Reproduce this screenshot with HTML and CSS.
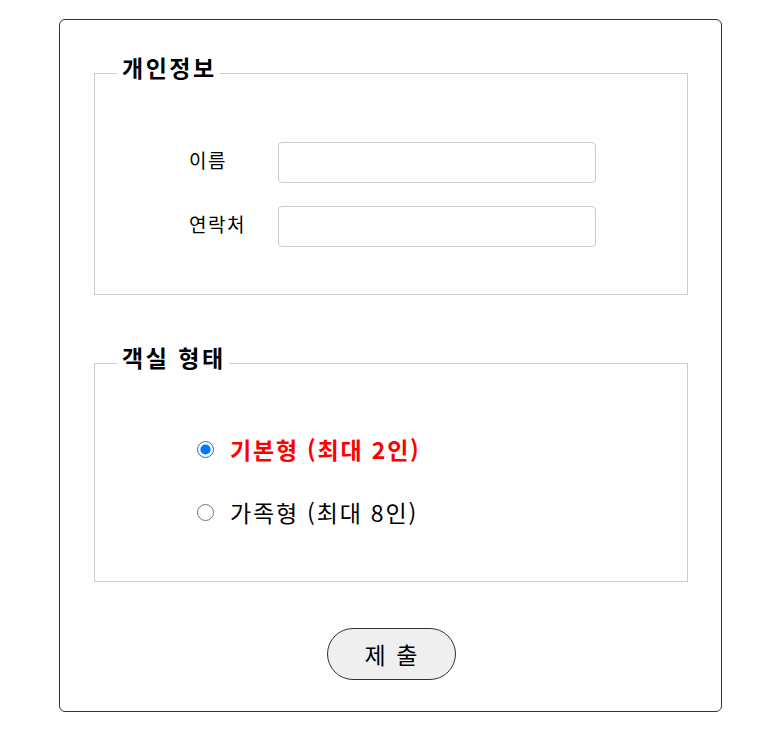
FILE: index.html
```html
<!DOCTYPE html>
<html lang="ko">
<head>
<meta charset="utf-8">
<title>객실 예약</title>
<link rel="stylesheet" href="styles.css">
</head>
<body>
<form class="card">
  <fieldset class="group">
    <legend class="legend">개인정보</legend>
    <div class="fields">
      <label class="label" for="name">이름</label>
      <input class="input" id="name" type="text">
      <label class="label" for="phone">연락처</label>
      <input class="input" id="phone" type="text">
    </div>
  </fieldset>
  <fieldset class="group group-room">
    <legend class="legend">객실 형태</legend>
    <div class="options">
      <label class="option option-checked"><input class="radio" type="radio" name="room" checked><span>기본형 (최대 2인)</span></label>
      <label class="option"><input class="radio" type="radio" name="room"><span>가족형 (최대 8인)</span></label>
    </div>
  </fieldset>
  <div class="actions">
    <button class="submit" type="button">제 출</button>
  </div>
</form>
</body>
</html>
```
FILE: styles.css
```css
* { box-sizing: border-box; }
body {
  margin: 0;
  font-family: "Noto Sans CJK KR", "Noto Sans", sans-serif;
  color: #000;
  background: #fff;
}
.card {
  width: 663px;
  margin: 19px 0 0 59px;
  padding: 33px 33px 31px 34px;
  border: 1px solid #333;
  border-radius: 6px;
}
.group {
  margin: 0;
  padding: 0;
  min-width: 0;
  border: 1px solid #ccc;
}
.legend {
  margin-left: 22px;
  padding: 0 3px 12px 5px;
  font-size: 23px;
  font-weight: 700;
  line-height: 28px;
  letter-spacing: 2.5px;
}
.fields {
  display: grid;
  grid-template-columns: 89px 318px;
  grid-auto-rows: 41px;
  row-gap: 23px;
  align-items: center;
  padding: 49px 0 47px 94px;
}
.label {
  font-size: 19px;
  line-height: 24px;
  letter-spacing: 1.5px;
  margin-top: -6px;
}
.input {
  width: 318px;
  height: 41px;
  border: 1px solid #ccc;
  border-radius: 4px;
  padding: 0 8px;
  font: inherit;
  font-size: 16px;
}
.group-room {
  margin-top: 48px;
}
.options {
  display: flex;
  flex-direction: column;
  gap: 33px;
  padding: 51px 0 54px 102px;
}
.option {
  display: flex;
  align-items: center;
  gap: 16px;
  height: 30px;
  font-size: 23px;
  line-height: 30px;
  letter-spacing: 1.8px;
}
.option-checked {
  color: #f00;
  font-weight: 700;
}
.radio {
  width: 17px;
  height: 17px;
  margin: 0;
  flex: none;
}
.actions {
  display: flex;
  justify-content: center;
  margin-top: 46px;
}
.submit {
  width: 129px;
  height: 52px;
  border: 1px solid #333;
  border-radius: 26px;
  background: #efefef;
  color: #000;
  font-family: inherit;
  font-size: 23px;
  letter-spacing: 2px;
  padding: 0 0 0 2px;
}
```
